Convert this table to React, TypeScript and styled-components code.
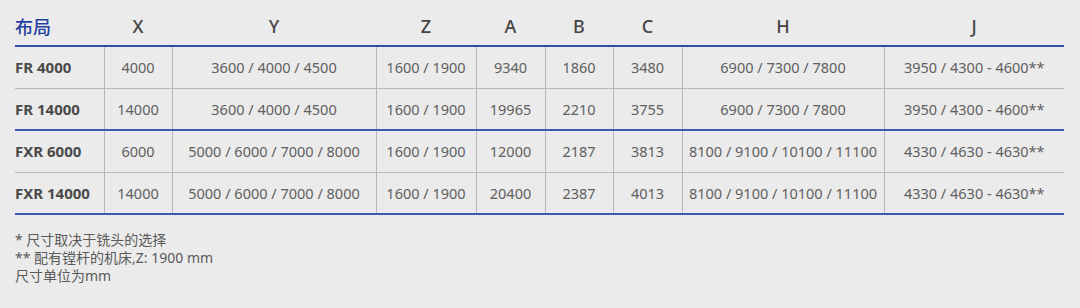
import React from 'react';
import styled, { createGlobalStyle } from 'styled-components';

interface Row {
  model: string;
  values: string[];
  groupEnd?: boolean;
}

const columns = ['X', 'Y', 'Z', 'A', 'B', 'C', 'H', 'J'];
const widths = [89, 68, 204, 100, 69, 68, 69, 202, 180];

const rows: Row[] = [
  {
    model: 'FR 4000',
    values: ['4000', '3600 / 4000 / 4500', '1600 / 1900', '9340', '1860', '3480', '6900 / 7300 / 7800', '3950 / 4300 - 4600**'],
  },
  {
    model: 'FR 14000',
    values: ['14000', '3600 / 4000 / 4500', '1600 / 1900', '19965', '2210', '3755', '6900 / 7300 / 7800', '3950 / 4300 - 4600**'],
    groupEnd: true,
  },
  {
    model: 'FXR 6000',
    values: ['6000', '5000 / 6000 / 7000 / 8000', '1600 / 1900', '12000', '2187', '3813', '8100 / 9100 / 10100 / 11100', '4330 / 4630 - 4630**'],
  },
  {
    model: 'FXR 14000',
    values: ['14000', '5000 / 6000 / 7000 / 8000', '1600 / 1900', '20400', '2387', '4013', '8100 / 9100 / 10100 / 11100', '4330 / 4630 - 4630**'],
    groupEnd: true,
  },
];

const notes = ['* 尺寸取决于铣头的选择', '** 配有镗杆的机床,Z: 1900 mm', '尺寸单位为mm'];

const GlobalStyle = createGlobalStyle`
  html, body {
    margin: 0;
    padding: 0;
    background: #ebebeb;
  }
  body {
    font-family: 'Noto Sans', 'Noto Sans CJK SC', sans-serif;
    color: #555;
  }
`;

const Page = styled.div`
  width: 1080px;
  height: 308px;
  padding: 0 0 0 15px;
  box-sizing: border-box;
  overflow: hidden;
`;

const Table = styled.table`
  border-collapse: collapse;
  table-layout: fixed;
  width: 1049px;
`;

const HeadCell = styled.th<{ $first?: boolean }>`
  height: 46px;
  padding: 6px 0 0;
  box-sizing: border-box;
  border-bottom: 2px solid #2f4fa6;
  font-size: 18px;
  font-weight: 500;
  color: ${({ $first }) => ($first ? '#2441a0' : '#444')};
  text-align: ${({ $first }) => ($first ? 'left' : 'center')};
  font-family: ${({ $first }) =>
    $first ? "'Noto Sans CJK SC', sans-serif" : "'Noto Sans', sans-serif"};
`;

const BodyRow = styled.tr<{ $groupEnd?: boolean }>`
  height: 42px;
  border-bottom: ${({ $groupEnd }) => ($groupEnd ? '2px solid #3a5cb0' : '1px solid #b8b8b8')};
`;

const ModelCell = styled.td`
  padding: 0;
  font-size: 15px;
  font-weight: 700;
  color: #4a4a4a;
  text-align: left;
  white-space: nowrap;
`;

const ValueCell = styled.td`
  padding: 0;
  font-size: 14.5px;
  color: #606060;
  text-align: center;
  white-space: nowrap;
  border-left: 1px solid #b8b8b8;
`;

const Notes = styled.div`
  margin-top: 16px;
  font-family: 'Noto Sans', 'Noto Sans CJK SC', sans-serif;
  font-size: 14px;
  line-height: 18px;
  color: #5a5a5a;
`;

export default function App() {
  return (
    <>
      <GlobalStyle />
      <Page>
        <Table>
          <colgroup>
            {widths.map((w, i) => (
              <col key={i} style={{ width: w }} />
            ))}
          </colgroup>
          <thead>
            <tr>
              <HeadCell $first>布局</HeadCell>
              {columns.map((c) => (
                <HeadCell key={c}>{c}</HeadCell>
              ))}
            </tr>
          </thead>
          <tbody>
            {rows.map((r) => (
              <BodyRow key={r.model} $groupEnd={r.groupEnd}>
                <ModelCell>{r.model}</ModelCell>
                {r.values.map((v, i) => (
                  <ValueCell key={i}>{v}</ValueCell>
                ))}
              </BodyRow>
            ))}
          </tbody>
        </Table>
        <Notes>
          {notes.map((n) => (
            <div key={n}>{n}</div>
          ))}
        </Notes>
      </Page>
    </>
  );
}
